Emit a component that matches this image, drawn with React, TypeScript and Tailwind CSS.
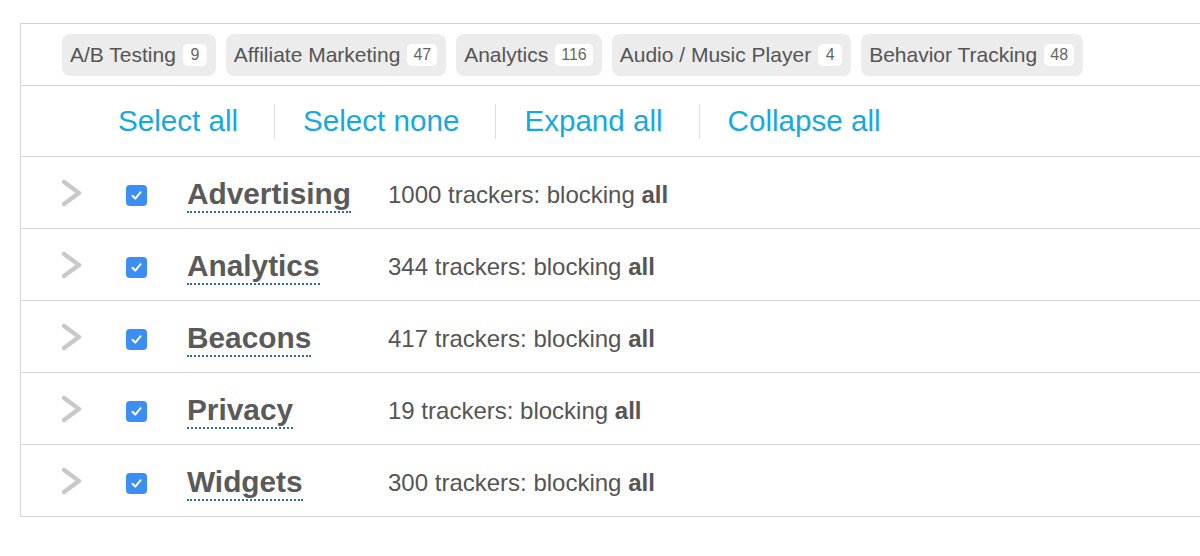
type Tag = { name: string; count: number };
type Category = { name: string; count: number };

const tags: Tag[] = [
  { name: 'A/B Testing', count: 9 },
  { name: 'Affiliate Marketing', count: 47 },
  { name: 'Analytics', count: 116 },
  { name: 'Audio / Music Player', count: 4 },
  { name: 'Behavior Tracking', count: 48 },
];

const categories: Category[] = [
  { name: 'Advertising', count: 1000 },
  { name: 'Analytics', count: 344 },
  { name: 'Beacons', count: 417 },
  { name: 'Privacy', count: 19 },
  { name: 'Widgets', count: 300 },
];

const actions = ['Select all', 'Select none', 'Expand all', 'Collapse all'];

const Chevron = () => (
  <svg width="24" height="30" viewBox="0 0 24 30" fill="none">
    <polyline points="4,4 19,15 4,26" stroke="#c9c9c9" strokeWidth="4.5" strokeLinecap="round" strokeLinejoin="round" />
  </svg>
);

const Checkbox = () => (
  <div className="w-[21px] h-[21px] rounded-[4px] bg-[#3b8ef2] flex items-center justify-center">
    <svg width="13" height="13" viewBox="0 0 13 13" fill="none">
      <path d="M2.5 6.8 L5.3 9.6 L10.6 3.2" stroke="white" strokeWidth="2" strokeLinecap="round" strokeLinejoin="round" />
    </svg>
  </div>
);

const App = () => {
  return (
    <div className="w-[1200px] h-[556px] bg-white overflow-hidden pt-[23px] pl-[20px] font-['Liberation_Sans',Arial,sans-serif]">
      <div className="w-[1200px] border-l border-t border-b border-[#d4d4d4]">
        {/* Tags */}
        <div className="h-[62px] border-b border-[#d4d4d4] flex items-center gap-[10px] pl-[41px]">
          {tags.map((tag) => (
            <div key={tag.name} className="h-[42px] rounded-[8px] bg-[#ececec] flex items-center pl-[8px] pr-[9px] text-[21px] text-[#555]">
              <span>{tag.name}</span>
              <span className="ml-[7px] h-[22px] min-w-[24px] px-[6px] rounded-[5px] bg-white text-[16px] text-[#666] flex items-center justify-center leading-none">
                {tag.count}
              </span>
            </div>
          ))}
        </div>

        {/* Actions */}
        <div className="h-[71px] border-b border-[#d4d4d4] flex items-center pl-[97px]">
          {actions.map((label, i) => (
            <div key={label} className="flex items-center">
              {i > 0 && <div className="w-px h-[35px] bg-[#dedede] ml-[36px] mr-[28px]" />}
              <a className="text-[29.6px] text-[#16a9e1] leading-none cursor-pointer">{label}</a>
            </div>
          ))}
        </div>

        {/* Categories */}
        {categories.map((cat, i) => (
          <div
            key={cat.name}
            className={`flex items-center pt-[5px] ${i < categories.length - 1 ? 'h-[72px] border-b border-[#d4d4d4]' : 'h-[71px]'}`}
          >
            <div className="w-[105px] pl-[39px] pb-[4px] flex items-center">
              <Chevron />
            </div>
            <div className="w-[61px]">
              <Checkbox />
            </div>
            <div className="w-[201px] flex">
              <span className="text-[29.8px] font-bold text-[#5a5a5a] leading-[30px] border-b-2 border-dotted border-[#2f6aa8] pb-[2px] mt-[1px]">
                {cat.name}
              </span>
            </div>
            <div className="text-[24px] text-[#555]">
              {cat.count} trackers: blocking <span className="font-bold">all</span>
            </div>
          </div>
        ))}
      </div>
    </div>
  );
};

export default App;
